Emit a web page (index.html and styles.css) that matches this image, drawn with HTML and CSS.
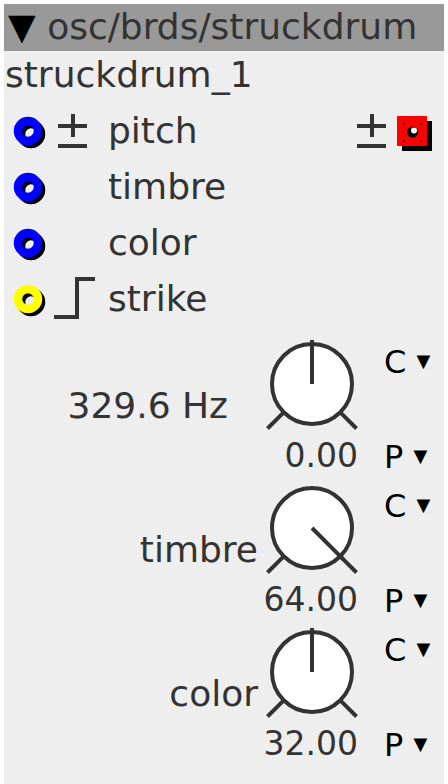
FILE: index.html
```html
<!DOCTYPE html>
<html lang="en">
<head>
    <meta charset="UTF-8">
    <meta name="viewport" content="width=device-width, initial-scale=1.0">
    <title>osc/brds/struckdrum</title>
    <link rel="stylesheet" href="styles.css">
</head>
<body>
    <div class="panel">
        <div class="title"><span class="caret">▼</span> osc/brds/struckdrum</div>
        <div class="row name">struckdrum_1</div>

        <div class="row">
            <svg class="jack" viewBox="0 0 40 40"><circle cx="23" cy="23" r="10" class="ring-shadow"/><circle cx="20" cy="20" r="10" class="ring-blue"/></svg>
            <span class="icon">
                <svg class="pm" viewBox="0 0 30 36"><path d="M15 1V24M0 13H29M0 33H29"/></svg>
            </span>
            <span class="label">pitch</span>
            <span class="extras">
                <svg class="pm" viewBox="0 0 30 36"><path d="M15 1V24M0 13H29M0 33H29"/></svg>
                <svg class="toggle" viewBox="0 0 36 36">
                    <rect x="5" y="5" width="30" height="30" fill="#000"/>
                    <rect x="0" y="0" width="30" height="30" fill="#f00"/>
                    <circle cx="15.5" cy="16" r="5.5" fill="#000"/>
                    <circle cx="17" cy="14.5" r="3" fill="#fff"/>
                    <circle cx="7" cy="8" r="1" fill="#000"/>
                    <circle cx="24" cy="8" r="1" fill="#000"/>
                    <circle cx="7" cy="25" r="1" fill="#000"/>
                    <circle cx="24" cy="25" r="1" fill="#000"/>
                </svg>
            </span>
        </div>

        <div class="row">
            <svg class="jack" viewBox="0 0 40 40"><circle cx="23" cy="23" r="10" class="ring-shadow"/><circle cx="20" cy="20" r="10" class="ring-blue"/></svg>
            <span class="icon"></span>
            <span class="label">timbre</span>
        </div>

        <div class="row">
            <svg class="jack" viewBox="0 0 40 40"><circle cx="23" cy="23" r="10" class="ring-shadow"/><circle cx="20" cy="20" r="10" class="ring-blue"/></svg>
            <span class="icon"></span>
            <span class="label">color</span>
        </div>

        <div class="row">
            <svg class="jack" viewBox="0 0 40 40"><circle cx="23" cy="23" r="10" class="ring-shadow"/><circle cx="20" cy="20" r="10" class="ring-yellow"/></svg>
            <span class="icon">
                <svg class="step" viewBox="0 0 44 44"><path d="M0 40H23V2H41"/></svg>
            </span>
            <span class="label">strike</span>
        </div>

        <div class="knobs">
            <div class="knob-block">
                <div class="k-label freq">329.6 Hz</div>
                <svg class="knob" viewBox="0 0 100 100">
                    <path d="M21.7 74.3L5.5 90.5M78.3 74.3L94.5 90.5"/>
                    <circle cx="50" cy="46" r="40"/>
                    <path d="M50 46V2"/>
                </svg>
                <div class="k-mode">C <span class="tri">▼</span></div>
                <div class="k-value">0.00</div>
                <div class="k-mode low">P <span class="tri">▼</span></div>
            </div>

            <div class="knob-block">
                <div class="k-label">timbre</div>
                <svg class="knob" viewBox="0 0 100 100">
                    <path d="M21.7 74.3L5.5 90.5M78.3 74.3L94.5 90.5"/>
                    <circle cx="50" cy="46" r="40"/>
                    <path d="M50 46L81.1 77.1"/>
                </svg>
                <div class="k-mode">C <span class="tri">▼</span></div>
                <div class="k-value">64.00</div>
                <div class="k-mode low">P <span class="tri">▼</span></div>
            </div>

            <div class="knob-block">
                <div class="k-label">color</div>
                <svg class="knob" viewBox="0 0 100 100">
                    <path d="M21.7 74.3L5.5 90.5M78.3 74.3L94.5 90.5"/>
                    <circle cx="50" cy="46" r="40"/>
                    <path d="M50 46V2"/>
                </svg>
                <div class="k-mode">C <span class="tri">▼</span></div>
                <div class="k-value">32.00</div>
                <div class="k-mode low">P <span class="tri">▼</span></div>
            </div>
        </div>
    </div>
</body>
</html>
```

FILE: styles.css
```css
body {
    margin: 4px;
    background-color: #fff;
    font-family: 'DejaVu Sans', sans-serif;
    font-size: 36px;
    color: #333;
}
.panel {
    width: 440px;
    background-color: #eee;
    padding-bottom: 20px;
}
.title {
    background-color: #999;
    height: 47px;
    box-sizing: border-box;
    padding: 2px 0 0 4px;
    line-height: 42px;
    white-space: nowrap;
    overflow: hidden;
}
.caret {
    color: #000;
}
.row {
    display: flex;
    align-items: center;
    height: 56px;
    box-sizing: border-box;
    padding: 3px 11px 11px 0;
    line-height: 42px;
}
.row.name {
    padding-left: 1px;
}
.jack {
    width: 40px;
    height: 40px;
    margin-left: 4px;
    flex: none;
}
.ring-shadow, .ring-blue, .ring-yellow {
    fill: none;
    stroke-width: 8.5;
}
.ring-shadow {
    stroke: #000;
}
.ring-blue {
    stroke: #00f;
}
.ring-yellow {
    stroke: #ff0;
}
.icon {
    width: 56px;
    height: 42px;
    display: flex;
    align-items: center;
    flex: none;
}
.pm {
    width: 30px;
    height: 36px;
    fill: none;
    stroke: #333;
    stroke-width: 4;
}
.icon .pm {
    margin-left: 10px;
}
.step {
    width: 44px;
    height: 44px;
    margin-left: 6px;
    fill: none;
    stroke: #333;
    stroke-width: 4;
}
.label {
    margin-left: 4px;
}
.extras {
    margin-left: auto;
    display: flex;
    align-items: center;
    gap: 10px;
}
.toggle {
    width: 36px;
    height: 36px;
    margin-top: 5px;
}
.knobs {
    margin-top: 5px;
}
.knob-block {
    display: grid;
    grid-template-columns: 1fr 100px 82px;
    grid-template-rows: 100px 35px;
    padding: 2px 0 7px;
    line-height: 35px;
}
.k-label {
    grid-row: 1 / 3;
    grid-column: 1;
    align-self: center;
    text-align: right;
    padding-right: 4px;
    line-height: 42px;
}
.k-label.freq {
    padding-right: 34px;
}
.knob {
    grid-row: 1;
    grid-column: 2;
    width: 100px;
    height: 100px;
    fill: none;
    stroke: #333;
    stroke-width: 4;
}
.knob circle {
    fill: #fff;
}
.k-value {
    grid-row: 2;
    grid-column: 2;
    text-align: right;
    padding-right: 4px;
    white-space: nowrap;
    font-size: 33px;
}
.k-mode {
    grid-column: 3;
    grid-row: 1;
    align-self: start;
    margin-top: 5px;
    padding-left: 22px;
    color: #000;
    white-space: nowrap;
    font-size: 32px;
}
.k-mode.low {
    grid-row: 2;
    margin-top: 0;
}
.tri {
    font-size: 18px;
    vertical-align: 6px;
}
```
